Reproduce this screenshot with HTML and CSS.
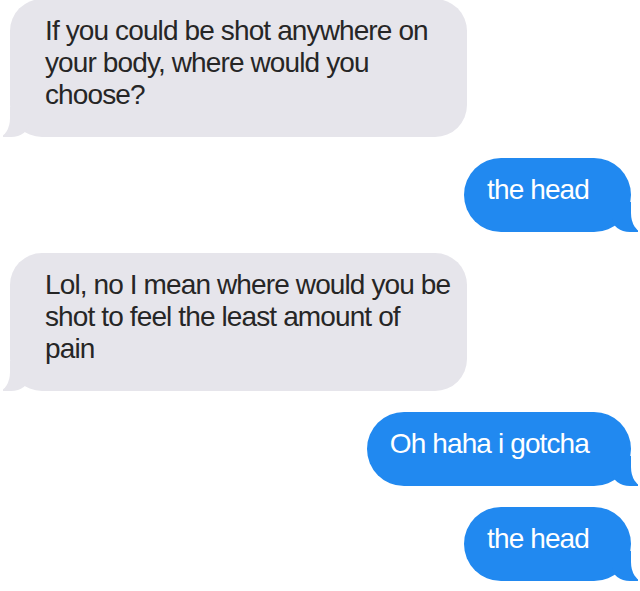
FILE: index.html
```html
<!DOCTYPE html>
<html lang="en">
<head>
<meta charset="utf-8">
<title>Messages</title>
<link rel="stylesheet" href="styles.css">
</head>
<body>
  <div class="chat">
    <div class="bubble them first">If you could be shot anywhere on your body, where would you choose?</div>
    <div class="bubble me">the head</div>
    <div class="bubble them">Lol, no I mean where would you be shot to feel the least amount of pain</div>
    <div class="bubble me">Oh haha i gotcha</div>
    <div class="bubble me">the head</div>
  </div>
</body>
</html>
```
FILE: styles.css
```css
html, body {
  margin: 0;
  padding: 0;
  background: #ffffff;
}

.chat {
  width: 640px;
  box-sizing: border-box;
  padding: 0 9px 0 10px;
  display: flex;
  flex-direction: column;
  gap: 21px;
  font-family: "Liberation Sans", Arial, sans-serif;
  font-size: 28px;
  line-height: 32px;
  letter-spacing: -0.88px;
}

.bubble {
  position: relative;
  box-sizing: border-box;
  padding-top: 16px;
  padding-bottom: 26px;
}

.first {
  margin-top: -1px;
}

.them {
  align-self: flex-start;
  width: 457px;
  padding-left: 35px;
  padding-right: 14px;
  background: #e6e5eb;
  color: #262626;
  border-radius: 32px;
}

.them::before {
  content: "";
  position: absolute;
  bottom: 0;
  left: -7px;
  width: 26px;
  height: 30px;
  background: #e6e5eb;
  border-bottom-right-radius: 18px 14px;
}

.them::after {
  content: "";
  position: absolute;
  bottom: 0;
  left: -14px;
  width: 14px;
  height: 32px;
  background: #ffffff;
  border-bottom-right-radius: 12px 19px;
}

.me {
  align-self: flex-end;
  padding-left: 23px;
  padding-right: 42px;
  background: #2189f0;
  color: #ffffff;
  border-radius: 37px;
  white-space: nowrap;
}

.me::before {
  content: "";
  position: absolute;
  bottom: 0;
  right: -7px;
  width: 26px;
  height: 30px;
  background: #2189f0;
  border-bottom-left-radius: 18px 14px;
}

.me::after {
  content: "";
  position: absolute;
  bottom: 0;
  right: -14px;
  width: 14px;
  height: 32px;
  background: #ffffff;
  border-bottom-left-radius: 12px 19px;
}
```
